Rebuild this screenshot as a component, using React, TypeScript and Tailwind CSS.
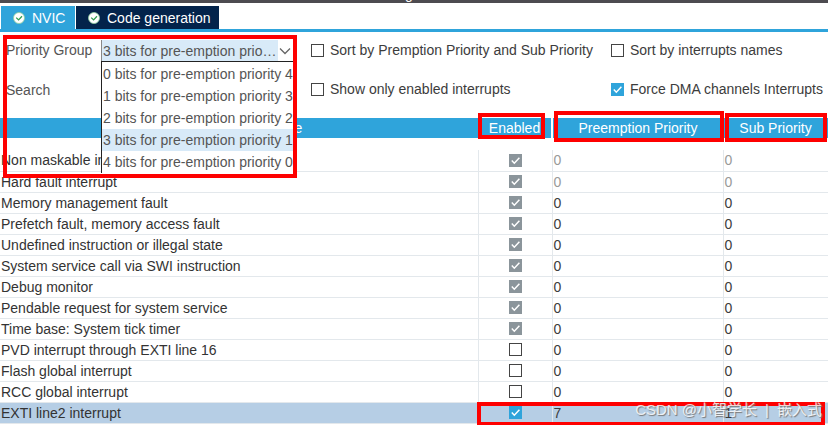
import type { ReactNode } from 'react'

type Row = { name: string; state: 'locked' | 'off' | 'on'; preemption: number; sub: number; dim?: boolean }

const rows: Row[] = [
    { name: 'Non maskable interrupt', state: 'locked', preemption: 0, sub: 0, dim: true },
    { name: 'Hard fault interrupt', state: 'locked', preemption: 0, sub: 0, dim: true },
    { name: 'Memory management fault', state: 'locked', preemption: 0, sub: 0 },
    { name: 'Prefetch fault, memory access fault', state: 'locked', preemption: 0, sub: 0 },
    { name: 'Undefined instruction or illegal state', state: 'locked', preemption: 0, sub: 0 },
    { name: 'System service call via SWI instruction', state: 'locked', preemption: 0, sub: 0 },
    { name: 'Debug monitor', state: 'locked', preemption: 0, sub: 0 },
    { name: 'Pendable request for system service', state: 'locked', preemption: 0, sub: 0 },
    { name: 'Time base: System tick timer', state: 'locked', preemption: 0, sub: 0 },
    { name: 'PVD interrupt through EXTI line 16', state: 'off', preemption: 0, sub: 0 },
    { name: 'Flash global interrupt', state: 'off', preemption: 0, sub: 0 },
    { name: 'RCC global interrupt', state: 'off', preemption: 0, sub: 0 },
    { name: 'EXTI line2 interrupt', state: 'on', preemption: 7, sub: 1 },
]

const groups = [
    '0 bits for pre-emption priority 4',
    '1 bits for pre-emption priority 3',
    '2 bits for pre-emption priority 2',
    '3 bits for pre-emption priority 1',
    '4 bits for pre-emption priority 0',
]

function Check({ checked, locked, label }: { checked?: boolean; locked?: boolean; label?: string }) {
    return (
        <span className="relative block size-[13px] shrink-0">
            <input
                type="checkbox"
                defaultChecked={checked}
                disabled={locked}
                aria-label={label}
                className="peer block size-[13px] appearance-none border border-[#444] bg-white checked:border-[#2fa4db] checked:bg-[#2fa4db] disabled:border-[#8b959b] disabled:bg-[#8b959b]"
            />
            <svg viewBox="0 0 13 13" className="pointer-events-none absolute inset-0 hidden size-[13px] peer-checked:block" fill="none" stroke="#fff" strokeWidth="1.5">
                <path d="M2.8 6.6 5.3 9.2 10.4 3.8" />
            </svg>
        </span>
    )
}

function Option({ checked, children }: { checked?: boolean; children: ReactNode }) {
    return (
        <label className="flex h-5 items-center gap-[6px] whitespace-nowrap">
            <Check checked={checked} />
            {children}
        </label>
    )
}

function TabIcon() {
    return (
        <svg viewBox="0 0 12 12" className="size-3 shrink-0" fill="none">
            <circle cx="6" cy="6" r="5.5" fill="#fff" stroke="#8fcf9f" strokeWidth="0.8" />
            <path d="M3.2 5.6 5.6 7.9 9 4.3" stroke="#2f9e4f" strokeWidth="1.3" />
        </svg>
    )
}

function Frame({ className }: { className: string }) {
    return <div className={`pointer-events-none absolute z-20 border-4 border-[#fe0000] ${className}`} />
}

export default function App() {
    return (
        <div className="relative min-h-screen overflow-hidden bg-white font-['Liberation_Sans','Noto_Sans_CJK_SC',sans-serif] text-sm text-[#3c3c3c]">
            <div className="flex h-[3px] items-end justify-center overflow-hidden bg-[#4d4b50] leading-[18px] text-white">
                Configuration
            </div>

            {/* Tabs */}
            <div className="flex items-end gap-[1px] border-b-[3px] border-[#2fa4db] pt-[3px] pl-[1px] text-white" role="tablist">
                <button role="tab" aria-selected="true" className="flex h-[23px] w-[74px] items-center gap-[7px] bg-[#2fa4db] pl-3">
                    <TabIcon />
                    NVIC
                </button>
                <button role="tab" aria-selected="false" className="flex h-[23px] items-center gap-[7px] bg-[#03234b] pr-2 pl-3">
                    <TabIcon />
                    Code generation
                </button>
            </div>

            {/* Options */}
            <div className="flex pt-2 pl-[6px]">
                <div className="relative grid grid-cols-[95px_192px] gap-y-[19px] text-[#555]">
                    <label htmlFor="group" className="leading-5">Priority Group</label>
                    <div className="relative flex h-[21px] border-l border-[#888]">
                        <select id="group" defaultValue={groups[3]} className="h-[21px] w-[176px] appearance-none bg-[#d8eaf8] pl-[1px] text-ellipsis">
                            {groups.map((g) => <option key={g}>{g}</option>)}
                        </select>
                        <svg viewBox="0 0 12 8" className="mt-[7px] ml-[1px] h-2 w-3" fill="none" stroke="#666" strokeWidth="1.3">
                            <path d="M1 1.5 6 6.5 11 1.5" />
                        </svg>
                        <ul role="listbox" className="absolute top-[21px] -left-px z-10 w-[192px] border-t border-l border-[#222] bg-white pt-[1px]">
                            {groups.map((g, i) => (
                                <li key={g} role="option" aria-selected={i === 3} className={`h-[22px] pl-[1px] leading-[22px] whitespace-nowrap ${i === 3 ? 'bg-[#d8eaf8]' : ''}`}>
                                    {g}
                                </li>
                            ))}
                        </ul>
                    </div>
                    <label htmlFor="search" className="leading-5">Search</label>
                    <input id="search" type="text" className="h-5 w-full" />
                    <Frame className="-top-[5px] -left-[3px] h-[143px] w-[294px]" />
                </div>
                <div className="ml-[18px] grid grid-cols-[300px_auto] content-start gap-y-[19px]">
                    <Option>Sort by Premption Priority and Sub Priority</Option>
                    <Option>Sort by interrupts names</Option>
                    <Option>Show only enabled interrupts</Option>
                    <Option checked>Force DMA channels Interrupts</Option>
                </div>
            </div>

            {/* Interrupts */}
            <table className="mt-[18px] w-full table-fixed border-collapse">
                <colgroup>
                    <col />
                    <col className="w-[74px]" />
                    <col className="w-[171px]" />
                    <col className="w-[105px]" />
                </colgroup>
                <thead className="text-white">
                    <tr className="h-5 bg-[#2fa4db] leading-5">
                        <th className="p-0 font-normal">NVIC Interrupt Table</th>
                        <th className="relative border-r-2 border-white p-0 font-normal">Enabled<Frame className="-top-[5px] left-0 h-[26px] w-[67px]" /></th>
                        <th className="relative p-0 font-normal">Preemption Priority<Frame className="-top-[7px] left-px h-[31px] w-[170px]" /></th>
                        <th className="relative p-0 font-normal">Sub Priority<Frame className="-top-[5px] left-[2px] h-[29px] w-[102px]" /></th>
                    </tr>
                </thead>
                <tbody>
                    <tr className="h-3" aria-hidden="true"><td colSpan={4} className="p-0" /></tr>
                    {rows.map((r) => (
                        <tr key={r.name} className={`h-[21px] border-b border-[#e3e8ec] leading-5 ${r.state === 'on' ? 'bg-[#b6cee5]' : ''}`}>
                            <td className="p-0 pl-[1px] text-[#333]">{r.name}</td>
                            <td className="relative border-x border-[#e3e8ec] p-0">
                                <div className="flex justify-center">
                                    <Check checked={r.state !== 'off'} locked={r.state === 'locked'} label={r.name} />
                                </div>
                                {r.state === 'on' && <Frame className="-top-px -left-[2px] h-6 w-[348px]" />}
                            </td>
                            <td className={`border-r border-[#e3e8ec] p-0 pl-[1px] ${r.dim ? 'text-[#999]' : ''}`}>{r.preemption}</td>
                            <td className={`p-0 pl-[1px] ${r.dim ? 'text-[#999]' : ''}`}>{r.sub}</td>
                        </tr>
                    ))}
                </tbody>
            </table>

            <div className="pointer-events-none absolute right-[6px] bottom-[5px] z-30 flex gap-2 text-[15px] leading-5 text-white/80 [text-shadow:1px_1px_1px_#777]">
                <span>CSDN @小智学长</span>
                <span>|</span>
                <span>嵌入式</span>
            </div>
        </div>
    )
}
